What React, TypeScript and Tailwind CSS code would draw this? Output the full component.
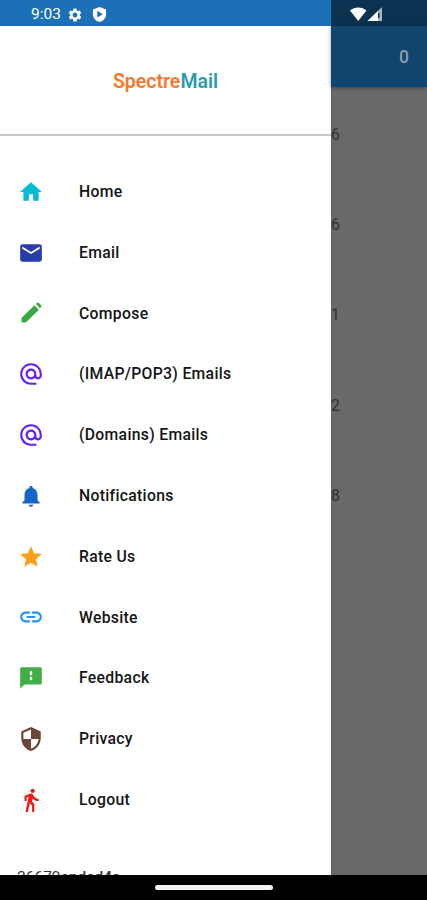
import React from 'react';
import type { IconType } from 'react-icons';
import {
  MdAlternateEmail,
  MdDirectionsWalk,
  MdEmail,
  MdHome,
  MdLink,
  MdNotifications,
  MdSecurity,
  MdSettings,
  MdStar,
} from 'react-icons/md';

interface MenuItem {
  label: string;
  icon: IconType;
  color: string;
}

// Pencil with rounded corners
const PencilIcon: IconType = ({ className }) => (
  <svg viewBox="0 0 24 24" fill="currentColor" className={className}>
    <path d="M15.2 4.900l4 4L8 20.100c-.5.500-1 .700-1.600.700H4.200c-.7 0-1-.300-1-1v-2.200c0-.600.200-1.100.700-1.600zM16.400 3.800l.9-.9c.7-.7 1.500-.7 2.200 0l1.600 1.600c.7.700.7 1.500 0 2.200l-.9.900z" />
  </svg>
);

const FeedbackIcon: IconType = ({ className }) => (
  <svg viewBox="0 0 24 24" className={className}>
    <path fill="currentColor" d="M3.500 2h17c.9 0 1.500.600 1.500 1.500v13c0 .900-.6 1.500-1.500 1.500H6l-4 4V3.500C2 2.600 2.600 2 3.500 2z" />
    <path fill="#fff" d="M12 5.300l1.100 1V9L12 9.800 10.900 9V6.300zM12 10.700l1.100.900v1.700l-1.100.900-1.100-.9v-1.700z" />
  </svg>
);

const menuItems: MenuItem[] = [
  { label: 'Home', icon: MdHome, color: 'text-[#00bcd4]' },
  { label: 'Email', icon: MdEmail, color: 'text-[#283dac]' },
  { label: 'Compose', icon: PencilIcon, color: 'text-[#36a93f]' },
  { label: '(IMAP/POP3) Emails', icon: MdAlternateEmail, color: 'text-[#651fff]' },
  { label: '(Domains) Emails', icon: MdAlternateEmail, color: 'text-[#651fff]' },
  { label: 'Notifications', icon: MdNotifications, color: 'text-[#1565c8]' },
  { label: 'Rate Us', icon: MdStar, color: 'text-[#f9a01b]' },
  { label: 'Website', icon: MdLink, color: 'text-[#2b90f5]' },
  { label: 'Feedback', icon: FeedbackIcon, color: 'text-[#43ad48]' },
  { label: 'Privacy', icon: MdSecurity, color: 'text-[#6d4538]' },
  { label: 'Logout', icon: MdDirectionsWalk, color: 'text-[#f01812]' },
];

const counts = ['6', '6', '1', '2', '8'];

const Drawer: React.FC = () => (
  <div className="flex h-full w-[331px] flex-none flex-col overflow-hidden bg-white">
    <div className="flex h-[26px] flex-none items-center bg-[#1b70b8] pl-[31px] pt-[3px] text-white">
      <span className="w-[36px] pt-px text-[15.5px] leading-none">9:03</span>
      <MdSettings className="size-4" />
      <svg viewBox="0 0 16 18" className="ml-[9px] h-[17px] w-[15px]">
        <path fill="currentColor" d="M8 1l7 2.700v5c0 4-3 7.300-7 8.300-4-1-7-4.300-7-8.300v-5z" />
        <path fill="#1b70b8" d="M5.600 5.100l5.800 3.600-5.800 3.600z" />
      </svg>
    </div>
    <div className="flex h-[109.5px] flex-none items-center justify-center border-b-2 border-[#c9c9c9] pt-[4px] text-[19.5px] font-semibold">
      <span className="text-[#f9772a]">Spectre</span>
      <span className="text-[#279bb0]">Mail</span>
    </div>
    <nav className="flex flex-none flex-col pt-[26px]">
      {menuItems.map(({ label, icon: Icon, color }) => (
        <a key={label} className="flex h-[60.8px] flex-none items-center pl-[18px]">
          <Icon className={`size-[26px] ${color}`} />
          <span className="ml-[35px] text-[15.75px] font-medium tracking-[0.3px] text-[#151515]">{label}</span>
        </a>
      ))}
    </nav>
    <div className="flex-none pl-[17px] pt-[35.5px] text-[15.5px] leading-[22px] text-[#333]">
      26679<span className="font-medium">ended4a</span>
    </div>
  </div>
);

const DimmedPage: React.FC = () => (
  <div className="flex min-w-0 flex-1 flex-col border-l border-[#606060] bg-[#696969]">
    <div className="-ml-px flex h-[26px] flex-none items-center bg-[#0b3251] pl-[19px] pt-[2px]">
      <svg viewBox="0 0 34 16" className="h-4 w-[34px]">
        <path fill="#fff" d="M0 4.500C4.500.500 12 .500 16.500 4.500L8.250 15z" />
        <path fill="#a9b4bf" d="M32 1v14H17.500z" />
        <path fill="#fff" d="M28 5v10H17.500z" />
        <path fill="#0b3251" d="M28 7h1.500v5H28z" />
      </svg>
    </div>
    <div className="-ml-px flex h-[61px] flex-none items-center justify-end bg-[#10456f] pr-[18px] pt-[2px] text-[17.5px] font-medium text-[#8f9ba4] shadow-[0_1px_4px_rgba(0,0,0,0.4)]">
      0
    </div>
    <div className="-ml-px flex flex-col pt-[2.5px]">
      {counts.map((count, i) => (
        <div key={i} className="flex h-[90.3px] items-center text-[15.75px] text-[#303030]">
          {count}
        </div>
      ))}
    </div>
  </div>
);

export default function App() {
  return (
    <div className="flex h-[900px] w-[427px] flex-col overflow-hidden bg-black font-['Roboto',sans-serif]">
      <div className="flex h-[875px] flex-none overflow-hidden">
        <Drawer />
        <DimmedPage />
      </div>
      <div className="flex h-[25px] flex-none items-center justify-center">
        <div className="h-[5px] w-[118px] rounded-full bg-[#f4f4f4]" />
      </div>
    </div>
  );
}
